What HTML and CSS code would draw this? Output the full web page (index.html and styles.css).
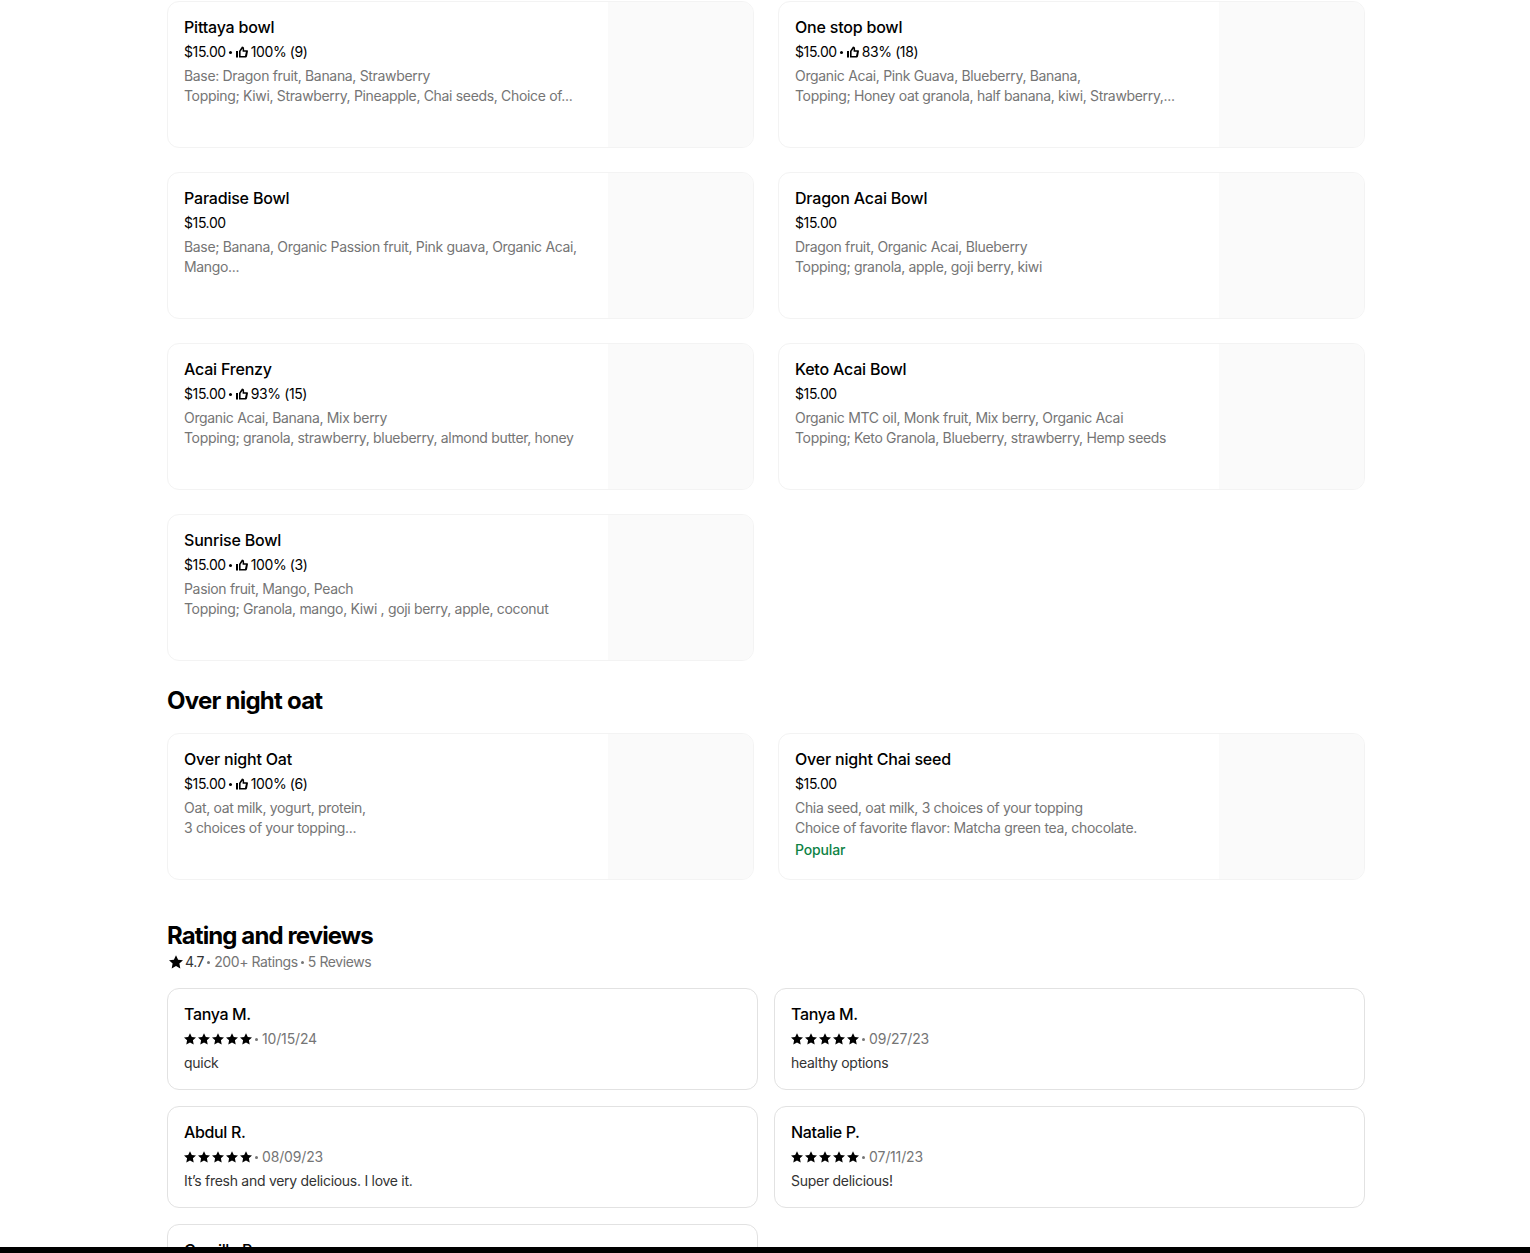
FILE: index.html
```html
<!DOCTYPE html>
<html lang="en">
<head>
<meta charset="utf-8">
<title>Menu</title>
<link rel="stylesheet" href="styles.css">
</head>
<body>
<svg class="defs" width="0" height="0" aria-hidden="true">
  <symbol id="thumb" viewBox="0 0 12 12"><path d="M0 5h2v6.500H0zM3 11.500V5L6 .5c1.300 0 2.100.8 2.100 2V4.300h3.400l.5.600-1 5.600-.9 1H3zM4.600 10h4.400l.9-4.200H6.600V2.400L4.600 5.400z" fill-rule="evenodd"/></symbol>
  <symbol id="star" viewBox="0 0 12 12"><path d="M6 .2l1.800 3.800 4.200.5-3.100 2.800.8 4.200L6 9.400l-3.700 2.100.8-4.200L0 4.500 4.200 4z"/></symbol>
</svg>
<main class="page">
  <section class="grid">
    <article class="item"><div class="body"><h3>Pittaya bowl</h3><p class="meta">$15.00<i class="dot"></i><svg class="thumb"><use href="#thumb"/></svg>100% (9)</p><p class="desc">Base: Dragon fruit, Banana, Strawberry<br>Topping; Kiwi, Strawberry, Pineapple, Chai seeds, Choice of...</p></div><div class="img"></div></article>
    <article class="item"><div class="body"><h3>One stop bowl</h3><p class="meta">$15.00<i class="dot"></i><svg class="thumb"><use href="#thumb"/></svg>83% (18)</p><p class="desc">Organic Acai, Pink Guava, Blueberry, Banana,<br>Topping; Honey oat granola, half banana, kiwi, Strawberry,...</p></div><div class="img"></div></article>
    <article class="item"><div class="body"><h3>Paradise Bowl</h3><p class="meta">$15.00</p><p class="desc">Base; Banana, Organic Passion fruit, Pink guava, Organic Acai, Mango...</p></div><div class="img"></div></article>
    <article class="item"><div class="body"><h3>Dragon Acai Bowl</h3><p class="meta">$15.00</p><p class="desc">Dragon fruit, Organic Acai, Blueberry<br>Topping; granola, apple, goji berry, kiwi</p></div><div class="img"></div></article>
    <article class="item"><div class="body"><h3>Acai Frenzy</h3><p class="meta">$15.00<i class="dot"></i><svg class="thumb"><use href="#thumb"/></svg>93% (15)</p><p class="desc">Organic Acai, Banana, Mix berry<br>Topping; granola, strawberry, blueberry, almond butter, honey</p></div><div class="img"></div></article>
    <article class="item"><div class="body"><h3>Keto Acai Bowl</h3><p class="meta">$15.00</p><p class="desc">Organic MTC oil, Monk fruit, Mix berry, Organic Acai<br>Topping; Keto Granola, Blueberry, strawberry, Hemp seeds</p></div><div class="img"></div></article>
    <article class="item"><div class="body"><h3>Sunrise Bowl</h3><p class="meta">$15.00<i class="dot"></i><svg class="thumb"><use href="#thumb"/></svg>100% (3)</p><p class="desc">Pasion fruit, Mango, Peach<br>Topping; Granola, mango, Kiwi , goji berry, apple, coconut</p></div><div class="img"></div></article>
  </section>
  <h2 class="section-title">Over night oat</h2>
  <section class="grid">
    <article class="item"><div class="body"><h3>Over night Oat</h3><p class="meta">$15.00<i class="dot"></i><svg class="thumb"><use href="#thumb"/></svg>100% (6)</p><p class="desc">Oat, oat milk, yogurt, protein,<br>3 choices of your topping...</p></div><div class="img"></div></article>
    <article class="item"><div class="body"><h3>Over night Chai seed</h3><p class="meta">$15.00</p><p class="desc">Chia seed, oat milk, 3 choices of your topping<br>Choice of favorite flavor: Matcha green tea, chocolate.</p><p class="popular">Popular</p></div><div class="img"></div></article>
  </section>
  <h2 class="reviews-title">Rating and reviews</h2>
  <p class="summary"><svg class="star-lg"><use href="#star"/></svg><span class="dark">4.7</span><i class="dot"></i>200+ Ratings<i class="dot"></i>5 Reviews</p>
  <section class="reviews">
    <article class="review"><h3>Tanya M.</h3><p class="rline"><span class="stars"><svg><use href="#star"/></svg><svg><use href="#star"/></svg><svg><use href="#star"/></svg><svg><use href="#star"/></svg><svg><use href="#star"/></svg></span><i class="dot"></i>10/15/24</p><p class="rtext">quick</p></article>
    <article class="review"><h3>Tanya M.</h3><p class="rline"><span class="stars"><svg><use href="#star"/></svg><svg><use href="#star"/></svg><svg><use href="#star"/></svg><svg><use href="#star"/></svg><svg><use href="#star"/></svg></span><i class="dot"></i>09/27/23</p><p class="rtext">healthy options</p></article>
    <article class="review"><h3>Abdul R.</h3><p class="rline"><span class="stars"><svg><use href="#star"/></svg><svg><use href="#star"/></svg><svg><use href="#star"/></svg><svg><use href="#star"/></svg><svg><use href="#star"/></svg></span><i class="dot"></i>08/09/23</p><p class="rtext">It’s fresh and very delicious. I love it.</p></article>
    <article class="review"><h3>Natalie P.</h3><p class="rline"><span class="stars"><svg><use href="#star"/></svg><svg><use href="#star"/></svg><svg><use href="#star"/></svg><svg><use href="#star"/></svg><svg><use href="#star"/></svg></span><i class="dot"></i>07/11/23</p><p class="rtext">Super delicious!</p></article>
    <article class="review"><h3>Camille P.</h3></article>
  </section>
</main>
<div class="bottom-bar"></div>
</body>
</html>
```
FILE: styles.css
```css
* { box-sizing: border-box; }
html, body { margin: 0; height: 1253px; overflow: hidden; background: #fff; }
body { font-family: Inter, "Liberation Sans", sans-serif; color: #000; position: relative; }
p, h2, h3 { margin: 0; }
.defs { position: absolute; }
.page { width: 1198px; margin-left: 167px; padding-top: 1px; }
.grid { display: grid; grid-template-columns: 587px 587px; gap: 24px; }
.item { height: 147px; border: 1px solid #f3f3f3; border-radius: 12px; display: flex; overflow: hidden; }
.body { flex: 1; min-width: 0; padding: 15px 16px 0 16px; }
.img { width: 145px; background: #fafafa; }
h3 { font-size: 16px; line-height: 20px; font-weight: 500; letter-spacing: -0.2px; }
.meta { font-size: 14px; line-height: 20px; margin-top: 5px; white-space: nowrap; letter-spacing: -0.4px; }
.dot { display: inline-block; width: 3px; height: 3px; border-radius: 50%; background: currentColor; margin: 0 4px 0 3px; vertical-align: 3px; }
.thumb { width: 12px; height: 12px; vertical-align: -1px; margin-right: 3px; }
.desc { font-size: 14px; line-height: 20px; color: #757575; margin-top: 4px; letter-spacing: -0.33px; }
.popular { font-size: 14px; line-height: 20px; color: #0e8345; font-weight: 500; margin-top: 2px; letter-spacing: -0.15px; }
.section-title { font-size: 24px; line-height: 32px; font-weight: 700; margin-top: 24px; margin-bottom: 16px; letter-spacing: -0.75px; }
.reviews-title { font-size: 24px; line-height: 32px; font-weight: 700; margin-top: 40px; letter-spacing: -0.9px; }
.summary { font-size: 14px; line-height: 20px; color: #757575; padding-left: 2px; letter-spacing: -0.4px; }
.dark { color: #333; }
.star-lg { width: 14px; height: 14px; vertical-align: -2px; margin-right: 2px; }
.reviews { display: grid; grid-template-columns: 591px 591px; gap: 16px; margin-top: 16px; }
.review { height: 102px; border: 1px solid #e2e2e2; border-radius: 12px; padding: 15px 16px 0; }
.review h3 { letter-spacing: -0.35px; }
.rline { font-size: 14px; line-height: 20px; color: #757575; margin-top: 5px; letter-spacing: -0.15px; }
.stars { display: inline-flex; gap: 2px; vertical-align: -1px; }
.stars svg { width: 12px; height: 12px; }
.rtext { font-size: 14px; line-height: 20px; margin-top: 4px; color: #333; letter-spacing: -0.28px; }
.bottom-bar { position: absolute; left: 0; right: 0; bottom: 0; height: 6px; background: #000; }
```
